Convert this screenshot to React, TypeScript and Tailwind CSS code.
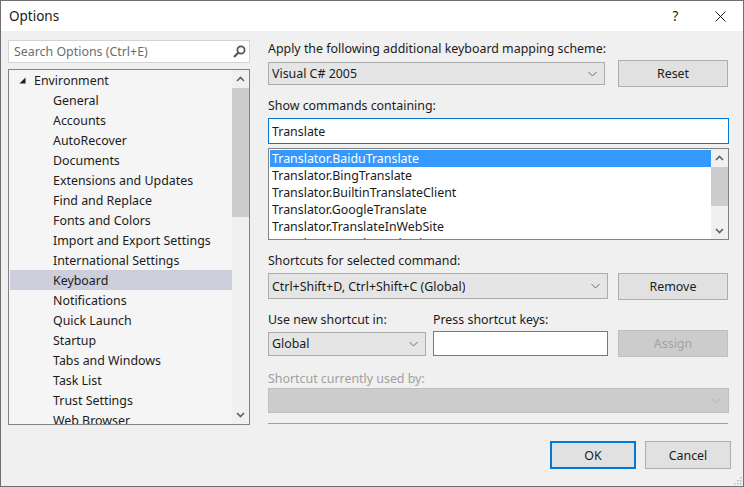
import React from 'react';

const treeItems = [
  'General',
  'Accounts',
  'AutoRecover',
  'Documents',
  'Extensions and Updates',
  'Find and Replace',
  'Fonts and Colors',
  'Import and Export Settings',
  'International Settings',
  'Keyboard',
  'Notifications',
  'Quick Launch',
  'Startup',
  'Tabs and Windows',
  'Task List',
  'Trust Settings',
  'Web Browser',
];

const commands = [
  'Translator.BaiduTranslate',
  'Translator.BingTranslate',
  'Translator.BuiltinTranslateClient',
  'Translator.GoogleTranslate',
  'Translator.TranslateInWebSite',
  'Translator.TranslateSelection',
];

const ChevronDown = ({ color = '#6d6d6d' }: { color?: string }) => (
  <svg width="9" height="6" viewBox="0 0 9 6" className="shrink-0">
    <path d="M0.5 1 L4.5 5 L8.5 1" fill="none" stroke={color} strokeWidth="1" />
  </svg>
);

const ArrowUp = () => (
  <svg width="9" height="6" viewBox="0 0 9 6">
    <path d="M1 5 L4.5 1.5 L8 5" fill="none" stroke="#606060" strokeWidth="1.6" />
  </svg>
);

const ArrowDown = () => (
  <svg width="9" height="6" viewBox="0 0 9 6">
    <path d="M1 1 L4.5 4.5 L8 1" fill="none" stroke="#606060" strokeWidth="1.6" />
  </svg>
);

const Select = ({ value, className }: { value: string; className: string }) => (
  <div className={`flex items-center justify-between border border-[#acacac] bg-[#e5e5e5] pl-[3px] pr-[7px] ${className}`}>
    <span className="truncate pt-[1px]">{value}</span>
    <ChevronDown />
  </div>
);

const Button = ({ label, className = '' }: { label: string; className?: string }) => (
  <button className={`flex h-[27px] w-[110px] items-center justify-center border border-[#adadad] bg-[#e1e1e1] pt-[1px] ${className}`}>
    {label}
  </button>
);

const App = () => {
  return (
    <div
      className="box-border flex h-[487px] w-[744px] flex-col overflow-hidden border border-[#6f6f6f] bg-[#f0f0f0] text-[12.4px] leading-[16px] text-[#1b1b1b]"
      style={{ fontFamily: '"Noto Sans", "Liberation Sans", sans-serif' }}
    >
      {/* Title bar */}
      <div className="flex h-[30px] shrink-0 items-center bg-white pl-[8px]">
        <span className="text-[13.5px]">Options</span>
        <div className="ml-auto flex items-center">
          <span className="w-[45px] text-center text-[13.5px]">?</span>
          <span className="flex w-[45px] justify-center">
            <svg width="11" height="11" viewBox="0 0 11 11">
              <path d="M0.5 0.5 L10.5 10.5 M10.5 0.5 L0.5 10.5" stroke="#1b1b1b" strokeWidth="1" />
            </svg>
          </span>
        </div>
      </div>

      {/* Body */}
      <div className="flex gap-[18px] pl-[7px] pt-[9px]">
        {/* Left column */}
        <div className="flex w-[242px] flex-col">
          <div className="flex h-[23px] items-center justify-between border border-[#d3d3d3] bg-white pl-[5px] pr-[3px]">
            <span className="pt-[1px] text-[#6d6d6d]">Search Options (Ctrl+E)</span>
            <svg width="13" height="13" viewBox="0 0 13 13">
              <circle cx="8" cy="5" r="3.6" fill="none" stroke="#555" strokeWidth="1.8" />
              <path d="M5.5 7.5 L1 12" stroke="#555" strokeWidth="2.2" />
            </svg>
          </div>
          <div className="mt-[6px] flex h-[356px] border border-[#828282] bg-[#f5f5f5]">
            <div className="w-[223px] overflow-hidden pl-[1px]">
              <div className="flex h-[20px] items-center pt-[1px]">
                <svg width="7" height="7" viewBox="0 0 7 7" className="ml-[9px] mr-[8px]">
                  <polygon points="6.5,0.5 6.5,6.5 0.5,6.5" fill="#1e1e1e" />
                </svg>
                <span>Environment</span>
              </div>
              {treeItems.map((item) => (
                <div
                  key={item}
                  className={`flex h-[20px] items-center pl-[43px] pt-[1px] ${item === 'Keyboard' ? 'bg-[#cccedb]' : ''}`}
                >
                  {item}
                </div>
              ))}
            </div>
            <div className="flex w-[17px] flex-col bg-[#f0f0f0]">
              <div className="flex h-[18px] items-center justify-center">
                <ArrowUp />
              </div>
              <div className="h-[129px] bg-[#cdcdcd]" />
              <div className="mt-auto flex h-[18px] items-center justify-center">
                <ArrowDown />
              </div>
            </div>
          </div>
        </div>

        {/* Right column */}
        <div className="flex w-[463px] flex-col">
          <div className="h-[16px] pt-[1px]">Apply the following additional keyboard mapping scheme:</div>
          <div className="mt-[4px] flex h-[27px] w-[460px] items-center">
            <Select value="Visual C# 2005" className="h-[23px] w-[337px]" />
            <Button label="Reset" className="ml-auto" />
          </div>

          <div className="mt-[10px] h-[16px] pt-[1px]">Show commands containing:</div>
          <div className="mt-[5px] flex h-[26px] w-[461px] items-center border border-[#0078d7] bg-white pl-[3px] pt-[1px]">
            Translate
          </div>

          <div className="mt-[4px] flex h-[92px] w-[461px] border border-[#828282] bg-white">
            <div className="w-[442px] overflow-hidden pl-[1px] pt-[1px]">
              {commands.map((cmd, i) => (
                <div
                  key={cmd}
                  className={`flex h-[17px] items-center pl-[2px] pt-[1px] ${i === 0 ? 'bg-[#3399ff] text-white' : ''}`}
                >
                  {cmd}
                </div>
              ))}
            </div>
            <div className="flex w-[17px] flex-col bg-[#f0f0f0]">
              <div className="flex h-[18px] items-center justify-center">
                <ArrowUp />
              </div>
              <div className="h-[39px] bg-[#cdcdcd]" />
              <div className="mt-auto flex h-[17px] items-center justify-center">
                <ArrowDown />
              </div>
            </div>
          </div>

          <div className="mt-[12px] h-[16px] pt-[1px]">Shortcuts for selected command:</div>
          <div className="mt-[5px] flex h-[27px] w-[460px] items-start">
            <Select value="Ctrl+Shift+D, Ctrl+Shift+C (Global)" className="h-[26px] w-[340px]" />
            <Button label="Remove" className="ml-auto" />
          </div>

          <div className="mt-[11px] flex h-[16px] pt-[1px]">
            <span className="w-[165px]">Use new shortcut in:</span>
            <span>Press shortcut keys:</span>
          </div>
          <div className="mt-[3px] flex h-[27px] w-[460px] items-center">
            <Select value="Global" className="h-[24px] w-[158px]" />
            <div className="ml-[7px] h-[25px] w-[175px] border border-[#7a7a7a] bg-white" />
            <button className="ml-auto flex h-[27px] w-[110px] items-center justify-center border border-[#bfbfbf] bg-[#cccccc] pt-[1px] text-[#a3a3a3]">
              Assign
            </button>
          </div>

          <div className="mt-[13px] h-[16px] pt-[1px] text-[#a0a0a0]">Shortcut currently used by:</div>
          <div className="mt-[2px] flex h-[25px] w-[461px] items-center justify-end border border-[#bfbfbf] bg-[#cccccc] pr-[7px]">
            <ChevronDown color="#b0b0b0" />
          </div>

          <div className="mt-[10px] h-px w-[460px] bg-[#a0a0a0]" />

          <div className="mt-[17px] flex justify-end gap-[9px]">
            <button className="flex h-[28px] w-[86px] items-center justify-center border-2 border-[#0078d7] bg-[#e1e1e1] pt-[1px]">
              OK
            </button>
            <button className="flex h-[28px] w-[86px] items-center justify-center border border-[#adadad] bg-[#e1e1e1] pt-[1px]">
              Cancel
            </button>
          </div>
        </div>
      </div>

      {/* Resize grip */}
      <div className="mt-auto flex justify-end pb-[1px] pr-[1px]">
        <svg width="9" height="9" viewBox="0 0 9 9">
          <rect x="7" y="1" width="1.5" height="1.5" fill="#b8b8b8" />
          <rect x="4" y="4" width="1.5" height="1.5" fill="#b8b8b8" />
          <rect x="7" y="4" width="1.5" height="1.5" fill="#b8b8b8" />
          <rect x="1" y="7" width="1.5" height="1.5" fill="#b8b8b8" />
          <rect x="4" y="7" width="1.5" height="1.5" fill="#b8b8b8" />
          <rect x="7" y="7" width="1.5" height="1.5" fill="#b8b8b8" />
        </svg>
      </div>
    </div>
  );
};

export default App;
